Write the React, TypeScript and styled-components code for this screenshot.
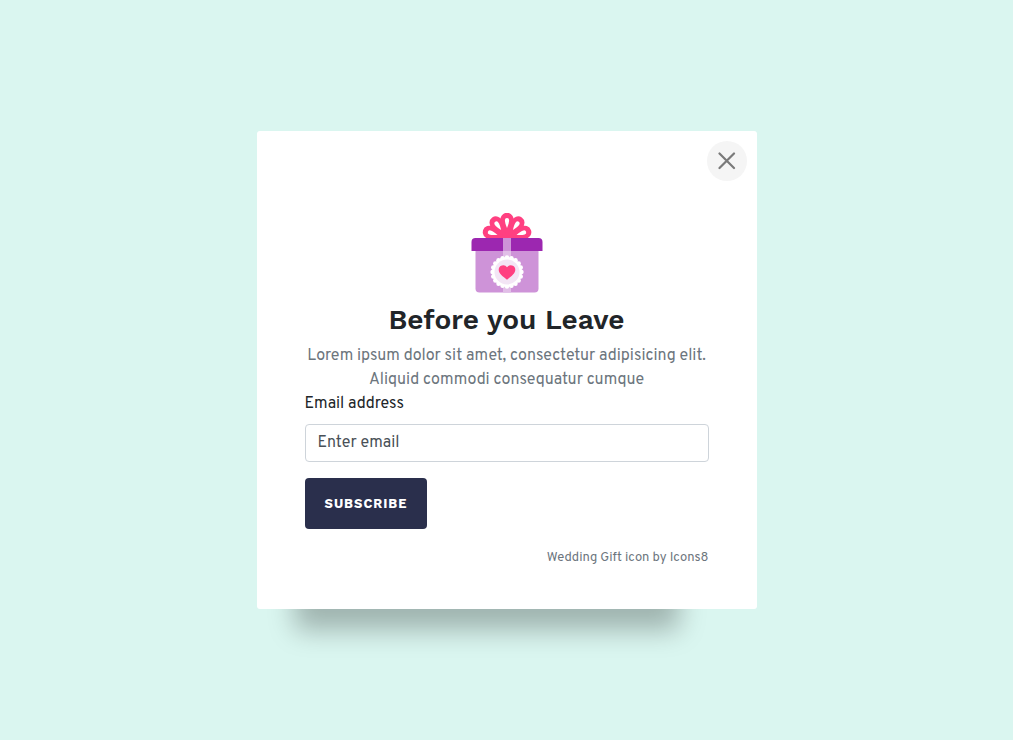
import React from "react";
import styled, { createGlobalStyle } from "styled-components";

const GlobalStyle = createGlobalStyle`
  *, *::before, *::after { box-sizing: border-box; }
  body {
    margin: 0;
    background: #daf6f0;
    color: #212529;
    font-family: Overpass, Roboto, "Liberation Sans", sans-serif;
    font-size: 16px;
    line-height: 24px;
  }
`;

const Page = styled.main`
  min-height: 100vh;
  display: flex;
  align-items: center;
  justify-content: center;
  padding: 24px 0;
`;

const Dialog = styled.section`
  position: relative;
  width: 100%;
  max-width: 500px;
  padding: 82px 48px 38px;
  border-radius: 3px;
  background: #fff;
  box-shadow: -20px 79px 25px -58px rgba(0, 0, 0, 0.27);
`;

const CloseButton = styled.button`
  position: absolute;
  top: 10px;
  right: 10px;
  display: flex;
  align-items: center;
  justify-content: center;
  width: 40px;
  height: 40px;
  padding: 0;
  border: 0;
  border-radius: 50%;
  background: #f5f5f5;
  color: #7a7a7a;
  cursor: pointer;
`;

const Intro = styled.header`
  display: flex;
  flex-direction: column;
  align-items: center;
  text-align: center;
`;

const Title = styled.h1`
  margin: 10px 0 7px;
  font-family: "Work Sans", Inter, sans-serif;
  font-size: 28px;
  font-weight: 600;
  line-height: 34px;
`;

const Lead = styled.p`
  margin: 0;
  color: #6c757d;
`;

const Form = styled.form`
  display: flex;
  flex-direction: column;
  align-items: flex-start;
`;

const Label = styled.label`
  margin-bottom: 8px;
`;

const EmailInput = styled.input`
  width: 100%;
  height: 38px;
  margin-bottom: 16px;
  padding: 6px 12px;
  border: 1px solid #ced4da;
  border-radius: 4px;
  background: #fff;
  color: #495057;
  font: inherit;
  &::placeholder { color: #495057; opacity: 1; }
`;

const SubmitButton = styled.button`
  padding: 15px 20px;
  border: 0;
  border-radius: 4px;
  background: #2a2f4c;
  color: #fff;
  font-family: "Work Sans", Inter, sans-serif;
  font-size: 13px;
  font-weight: 700;
  line-height: 21px;
  letter-spacing: 1px;
  text-transform: uppercase;
  cursor: pointer;
`;

const Credit = styled.p`
  margin: 16px 0 0;
  color: #6c757d;
  font-size: 13px;
  font-weight: 400;
  line-height: 26px;
  text-align: right;
`;

const scallops = Array.from({ length: 20 }, (_, i) => (i * Math.PI) / 10);
const petals = [-72, -36, 0, 36, 72];

function GiftIcon() {
  return (
    <svg width="80" height="80" viewBox="0 0 80 80" aria-hidden="true">
      <path d="M22 25A18 18 0 0 1 58 25Z" fill="#ff4081" />
      {petals.map((angle) => (
        <g key={angle} transform={`rotate(${angle} 40 25)`}>
          <path d="M40 25L33.800 8.200A6.500 6.500 0 1 1 46.200 8.200Z" fill="#ff4081" />
          <path d="M40 15C38.500 11.500 37.900 9 37.900 7A2.100 2.100 0 0 1 42.100 7C42.100 9 41.500 11.500 40 15Z" fill="#fff" />
        </g>
      ))}
      <path d="M8.500 38H71.500V75.500A4 4 0 0 1 67.500 79.500H12.500A4 4 0 0 1 8.500 75.500Z" fill="#ce93d8" />
      <path d="M36 38H44V79.500H36Z" fill="#e1bee7" />
      <path d="M4.500 38V29A4 4 0 0 1 8.500 25H71.500A4 4 0 0 1 75.500 29V38Z" fill="#9c27b0" />
      <path d="M36 25H44V38H36Z" fill="#ce93d8" />
      <g fill="#fff">
        <circle cx="40" cy="59" r="15" />
        {scallops.map((a) => (
          <circle key={a} cx={40 + 14.500 * Math.cos(a)} cy={59 + 14.500 * Math.sin(a)} r="2.200" />
        ))}
      </g>
      <circle cx="40" cy="59" r="12.500" fill="#f3e5f5" />
      <path d="M40 66.700C36 63.500 31.700 60.500 31.700 56.700A4.500 4.500 0 0 1 40 54.300A4.500 4.500 0 0 1 48.300 56.700C48.300 60.500 44 63.500 40 66.700Z" fill="#ff4081" />
    </svg>
  );
}

export default function App() {
  return (
    <>
      <GlobalStyle />
      <Page>
        <Dialog role="dialog" aria-labelledby="title">
          <CloseButton type="button" aria-label="Close">
            <svg width="18" height="18" viewBox="0 0 18 18" fill="none" stroke="currentColor" strokeWidth="2.200" strokeLinecap="round" aria-hidden="true">
              <path d="M1.500 1.500L16 16M16 1.500L1.500 16" />
            </svg>
          </CloseButton>
          <Intro>
            <GiftIcon />
            <Title id="title">Before you Leave</Title>
            <Lead>
              Lorem ipsum dolor sit amet, consectetur adipisicing elit. Aliquid commodi consequatur cumque
            </Lead>
          </Intro>
          <Form onSubmit={(e: React.FormEvent) => e.preventDefault()}>
            <Label htmlFor="email">Email address</Label>
            <EmailInput id="email" type="email" placeholder="Enter email" />
            <SubmitButton type="submit">Subscribe</SubmitButton>
          </Form>
          <Credit>Wedding Gift icon by Icons8</Credit>
        </Dialog>
      </Page>
    </>
  );
}
